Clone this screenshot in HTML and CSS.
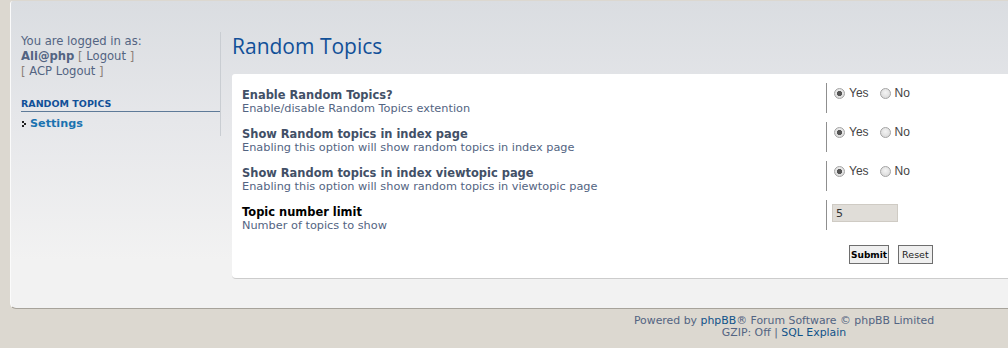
FILE: index.html
```html
<!DOCTYPE html>
<html lang="en">
<head>
  <meta charset="UTF-8">
  <title>ACP - Random Topics</title>
  <link rel="stylesheet" href="styles.css">
</head>
<body>
  <div class="page">
    <div class="acp-panel">
      <div class="acp-menu">
        <p class="acp-user">
          You are logged in as:<br>
          <strong>Ali@php</strong> <span class="bracket">[</span> <a href="#">Logout</a> <span class="bracket">]</span><br>
          <span class="bracket">[</span> <a href="#">ACP Logout</a> <span class="bracket">]</span>
        </p>
        <div class="acp-menu-block">
          <div class="acp-menu-title">Random Topics</div>
          <a class="acp-menu-item" href="#"><span class="menu-arrow"></span>Settings</a>
        </div>
      </div>

      <div class="acp-main">
        <h1>Random Topics</h1>
        <form class="acp-box" onsubmit="return false">
          <div class="acp-row">
            <div class="acp-dt">
              <label class="row-title">Enable Random Topics?</label>
              <span class="row-explain">Enable/disable Random Topics extention</span>
            </div>
            <div class="acp-dd">
              <label class="radio"><input type="radio" name="rt_enable" checked> Yes</label>
              <label class="radio"><input type="radio" name="rt_enable"> No</label>
            </div>
          </div>
          <div class="acp-row">
            <div class="acp-dt">
              <label class="row-title">Show Random topics in index page</label>
              <span class="row-explain">Enabling this option will show random topics in index page</span>
            </div>
            <div class="acp-dd">
              <label class="radio"><input type="radio" name="rt_index" checked> Yes</label>
              <label class="radio"><input type="radio" name="rt_index"> No</label>
            </div>
          </div>
          <div class="acp-row">
            <div class="acp-dt">
              <label class="row-title">Show Random topics in index viewtopic page</label>
              <span class="row-explain">Enabling this option will show random topics in viewtopic page</span>
            </div>
            <div class="acp-dd">
              <label class="radio"><input type="radio" name="rt_viewtopic" checked> Yes</label>
              <label class="radio"><input type="radio" name="rt_viewtopic"> No</label>
            </div>
          </div>
          <div class="acp-row">
            <div class="acp-dt">
              <label class="row-title dark">Topic number limit</label>
              <span class="row-explain">Number of topics to show</span>
            </div>
            <div class="acp-dd">
              <input class="num-input" type="text" value="5">
            </div>
          </div>
          <div class="acp-buttons">
            <button class="btn btn-main" type="submit">Submit</button>
            <button class="btn" type="reset">Reset</button>
          </div>
        </form>
      </div>
    </div>

    <div class="acp-footer">
      Powered by <a href="#">phpBB</a>&reg; Forum Software &copy; phpBB Limited<br>
      GZIP: Off | <a href="#">SQL Explain</a>
    </div>
  </div>
</body>
</html>
```

FILE: styles.css
```css
html, body {
  margin: 0;
  padding: 0;
  overflow: hidden;
}
body {
  background: #dcd8d0;
  font-family: "DejaVu Sans", Verdana, sans-serif;
  font-size: 11px;
  color: #536482;
}
a {
  color: #105289;
  text-decoration: none;
}
.page {
  width: 1568px;
  padding: 1px 10px 0 10px;
  box-sizing: border-box;
}
.acp-panel {
  display: flex;
  background: linear-gradient(to bottom, #dadde1 0, #e6e7ea 120px, #f2f2f2 260px);
  border-left: 1px solid #fbfbfb;
  border-bottom: 1px solid #a7a39b;
  border-radius: 3px 0 0 6px;
  padding-bottom: 29px;
}

/* left menu */
.acp-menu {
  width: 200px;
  padding: 31px 0 0 10px;
}
.acp-user {
  margin: 0;
  padding-top: 2px;
  line-height: 15px;
  border-right: 1px solid #c9cdd2;
  font-size: 11.6px;
}
.acp-user strong {
  color: #536482;
}
.acp-user a {
  color: #536482;
}
.bracket {
  color: #8b7f78;
}
.acp-menu-block {
  border-right: 1px solid #c9cdd2;
  padding-top: 19px;
  padding-bottom: 6px;
}
.acp-menu-title {
  font-size: 9.5px;
  font-weight: bold;
  text-transform: uppercase;
  color: #115098;
  padding-bottom: 2px;
  border-bottom: 1px solid #5e7a98;
}
.acp-menu-item {
  display: flex;
  align-items: center;
  gap: 4px;
  padding: 5px 0 0 1px;
  font-size: 11.2px;
  font-weight: bold;
  color: #1a73b0;
}
.menu-arrow {
  width: 4px;
  height: 6px;
  background:
    linear-gradient(#222, #222) 0 0 / 2px 2px no-repeat,
    linear-gradient(#222, #222) 2px 2px / 2px 2px no-repeat,
    linear-gradient(#222, #222) 0 4px / 2px 2px no-repeat;
}

/* main area */
.acp-main {
  flex: 1;
  padding-left: 11px;
  padding-right: 10px;
}
.acp-main h1 {
  margin: 32px 0 15px 0;
  font-family: "Open Sans", "DejaVu Sans", sans-serif;
  font-size: 21px;
  font-weight: normal;
  line-height: 26px;
  color: #115098;
}
.acp-box {
  background: #fff;
  border-bottom: 1px solid #cccccc;
  border-radius: 3px 0 0 4px;
  padding: 9px 10px 14px 10px;
}
.acp-row {
  display: flex;
  height: 39px;
}
.acp-dt {
  width: 584px;
  padding-top: 6px;
  display: flex;
  flex-direction: column;
}
.row-title {
  font-weight: bold;
  font-size: 11.45px;
  line-height: 13px;
  color: #425067;
}
.row-title.dark {
  color: #000;
}
.row-explain {
  font-size: 11.3px;
  line-height: 13px;
  color: #536482;
}
.acp-dd {
  align-self: flex-start;
  height: 30px;
  border-left: 1px solid #8f8f8f;
  padding: 2px 0 0 7px;
  box-sizing: border-box;
  display: flex;
  gap: 11px;
  align-items: flex-start;
}
.radio {
  display: flex;
  align-items: center;
  gap: 4px;
  font-family: "Liberation Sans", Arial, sans-serif;
  font-size: 12px;
  color: #444;
  line-height: 16px;
}
.radio input {
  appearance: none;
  -webkit-appearance: none;
  margin: 0;
  width: 11px;
  height: 11px;
  border: 1px solid #a4a4a4;
  border-radius: 50%;
  background: radial-gradient(circle at 50% 40%, #f4f4f4, #d4d4d4);
  box-sizing: border-box;
}
.radio input:checked {
  background:
    radial-gradient(circle, #555 0, #555 2.4px, transparent 2.9px),
    radial-gradient(circle at 50% 40%, #f4f4f4, #d4d4d4);
}
.num-input {
  margin: 2px 0 0 -2px;
  width: 66px;
  height: 18px;
  box-sizing: border-box;
  background: #e0ddd8;
  border: 1px solid #cfcbc4;
  font-family: "DejaVu Sans", Verdana, sans-serif;
  font-size: 11px;
  color: #333;
  padding: 0 3px;
}
.acp-buttons {
  display: flex;
  gap: 9px;
  padding: 6px 0 0 607px;
}
.btn {
  height: 19px;
  padding: 0 3px;
  background: #efefef;
  border: 1px solid #6e6e6e;
  font-family: "DejaVu Sans", Verdana, sans-serif;
  font-size: 9.5px;
  color: #222;
  cursor: pointer;
}
.btn-main {
  padding: 0 1px;
  font-size: 9px;
  font-weight: bold;
  color: #000;
}

/* footer */
.acp-footer {
  text-align: center;
  padding-top: 6px;
  font-size: 10.9px;
  line-height: 12px;
  color: #536482;
}
```
